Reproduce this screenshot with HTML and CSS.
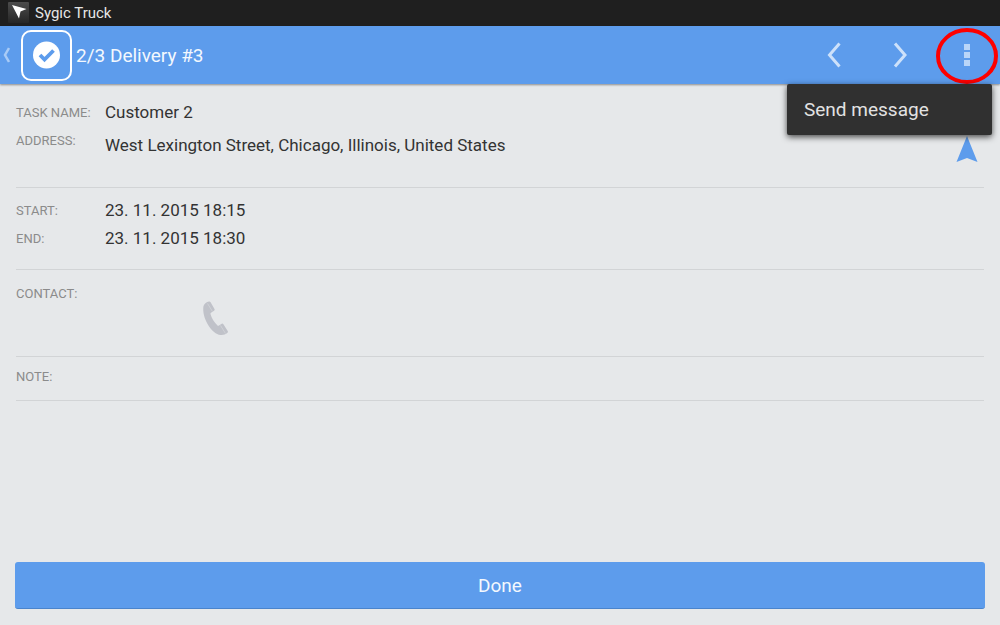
FILE: index.html
```
<!DOCTYPE html>
<html lang="en">
<head>
<meta charset="UTF-8">
<meta name="viewport" content="width=device-width, initial-scale=1">
<title>Sygic Truck</title>
<link rel="stylesheet" href="styles.css">
</head>
<body>
<div class="status-bar">
  <svg class="app-icon" width="21" height="21" viewBox="0 0 21 21" aria-hidden="true">
    <defs>
      <linearGradient id="tile" x1="0" y1="0" x2="0" y2="1">
        <stop offset="0" stop-color="#4c4c4c"/>
        <stop offset="1" stop-color="#262626"/>
      </linearGradient>
    </defs>
    <rect width="21" height="21" rx="1" fill="url(#tile)"/>
    <path d="M4 3L18.500 7L12.500 9.500L11 16.500Z" fill="#fff"/>
  </svg>
  <span>Sygic Truck</span>
</div>

<header class="app-bar">
  <a class="back" href="#" aria-label="Back">
    <svg width="8" height="16" viewBox="0 0 8 16"><path d="M7 1L3 8L7 15" fill="none" stroke="#a9cbf6" stroke-width="2.500"/></svg>
    <svg width="52" height="52" viewBox="0 0 52 52">
      <rect x="2" y="2" width="49" height="49" rx="9" fill="none" stroke="#fff" stroke-width="2"/>
      <circle cx="26.500" cy="26" r="13.500" fill="#fff"/>
      <path d="M20 26L24.500 30.500L33.500 21.500" fill="none" stroke="#5d9cec" stroke-width="3.800"/>
    </svg>
  </a>
  <h1 class="title">2/3 Delivery #3</h1>
  <nav class="actions">
    <button class="action" type="button" aria-label="Previous task">
      <svg width="18" height="26" viewBox="0 0 18 26"><path d="M13.500 1.500L3.500 13L13.500 24.500" fill="none" stroke="#cde1fa" stroke-width="3"/></svg>
    </button>
    <button class="action" type="button" aria-label="Next task">
      <svg width="16" height="26" viewBox="0 0 16 26"><path d="M2 1.500L12 13L2 24.500" fill="none" stroke="#cde1fa" stroke-width="3"/></svg>
    </button>
    <button class="action" type="button" aria-label="More options">
      <svg width="6" height="22" viewBox="0 0 6 22" fill="#b9d5f8"><path d="M0 0h6v6H0zM0 8h6v6H0zM0 16h6v6H0z"/></svg>
    </button>
    <svg class="highlight" width="62" height="56" viewBox="0 0 62 56" aria-hidden="true">
      <ellipse cx="31" cy="28" rx="29" ry="26" fill="none" stroke="#fe0000" stroke-width="4"/>
    </svg>
    <div class="menu">
      <button class="menu-item" type="button">Send message</button>
    </div>
  </nav>
</header>

<main class="details">
  <dl class="section section-task">
    <dt>TASK NAME:</dt>
    <dd>Customer 2</dd>
    <dt>ADDRESS:</dt>
    <dd class="address">
      <span>West Lexington Street, Chicago, Illinois, United States</span>
      <a class="navigate" href="#" aria-label="Navigate">
        <svg width="22" height="27" viewBox="0 0 22 27"><path d="M11 0L21.500 26L11 22L0.500 26Z" fill="#5d9cec"/></svg>
      </a>
    </dd>
  </dl>
  <dl class="section section-time">
    <dt>START:</dt>
    <dd>23. 11. 2015 18:15</dd>
    <dt>END:</dt>
    <dd>23. 11. 2015 18:30</dd>
  </dl>
  <dl class="section section-contact">
    <dt>CONTACT:</dt>
    <dd>
      <button class="call" type="button" aria-label="Call contact">
        <svg width="26" height="35" viewBox="0 0 26 35">
          <path d="M0.500 5C1.500 2.500 3.500 1 6 0.500Q7 0.300 7.600 1.200L11.500 8Q12 9 11 9.700L8 11.700Q7.300 12.200 7.500 13C8.500 17 11 21 14.500 24.500Q15.300 25.200 16 24.500L18.700 22.800Q19.700 22.300 20.400 23.200L24.700 30Q25.300 31 24.500 31.800C22.500 33.500 20 34.300 17.500 34C8 32.500-1.500 16 0.500 5Z" fill="#c0c2c9"/>
          <path d="M4.500 2.500L9.500 10.500M17.500 24.500L22.500 32.500" stroke="#cfd1d6" stroke-width="1"/>
        </svg>
      </button>
    </dd>
  </dl>
  <dl class="section section-note">
    <dt>NOTE:</dt>
    <dd></dd>
  </dl>
</main>

<footer class="bottom">
  <button class="done" type="button">Done</button>
</footer>
</body>
</html>
```
FILE: styles.css
```
* {
  box-sizing: border-box;
}
body {
  display: flex;
  flex-direction: column;
  min-height: 100vh;
  margin: 0;
  background: #e6e8ea;
  color: #333;
  font-family: Roboto, "Noto Sans", sans-serif;
  font-size: 17px;
}
button {
  margin: 0;
  padding: 0;
  border: 0;
  background: none;
  font: inherit;
  cursor: pointer;
}
svg {
  display: block;
}

/* top bars */
.status-bar {
  display: flex;
  align-items: center;
  gap: 6px;
  height: 26px;
  padding: 0 8px;
  background: #1f1f1f;
  color: #e6e6e6;
  font-size: 15px;
}
.app-icon {
  margin-bottom: 2px;
}
.app-bar {
  display: flex;
  align-items: center;
  height: 58px;
  padding: 0 0 0 2px;
  background: #5d9cec;
  box-shadow: 0 1px 2px rgba(0,0,0,0.4);
}
.back {
  display: flex;
  align-items: center;
  gap: 10px;
}
.title {
  margin: 0 0 0 4px;
  color: #f3f8fe;
  font-size: 19px;
  font-weight: normal;
}
.actions {
  position: relative;
  display: flex;
  align-self: stretch;
  margin-left: auto;
}
.action {
  display: flex;
  align-items: center;
  justify-content: center;
  width: 66px;
}
.highlight {
  position: absolute;
  top: 2px;
  right: 2px;
  pointer-events: none;
}
.menu {
  position: absolute;
  top: 100%;
  right: 8px;
  width: 205px;
  border-radius: 2px;
  background: #303030;
  box-shadow: 0 2px 6px rgba(0,0,0,0.7);
}
.menu-item {
  width: 100%;
  height: 51px;
  padding: 0 17px;
  color: #e2e2e2;
  font-size: 19px;
  text-align: left;
}

/* task details */
.details {
  flex: 1;
  padding: 0 16px;
}
.section {
  display: grid;
  grid-template-columns: 89px 1fr;
  margin: 0;
  border-bottom: 1px solid #d2d4d6;
  line-height: 28px;
}
.section dt {
  padding-top: 1px;
  color: #8b8b8b;
  font-size: 13px;
  line-height: 27px;
}
.section dd {
  margin: 0;
}
.section-task {
  padding: 14px 0 20px;
}
.section-time {
  padding: 8px 0 17px;
}
.section-contact {
  padding: 9px 0 15px;
}
.section-note {
  padding: 5px 0 10px;
}
.address {
  display: flex;
  align-items: center;
  justify-content: space-between;
  height: 41px;
  padding-bottom: 3px;
}
.navigate {
  padding: 8px 6px 0 0;
}
.call {
  display: block;
  padding: 22px 98px 5px;
}

.bottom {
  padding: 0 15px 16px;
}
.done {
  width: 100%;
  height: 47px;
  border-bottom: 1px solid #4a84cc;
  border-radius: 3px;
  background: #5d9cec;
  color: #f3f8fe;
  font-size: 19px;
}
```
